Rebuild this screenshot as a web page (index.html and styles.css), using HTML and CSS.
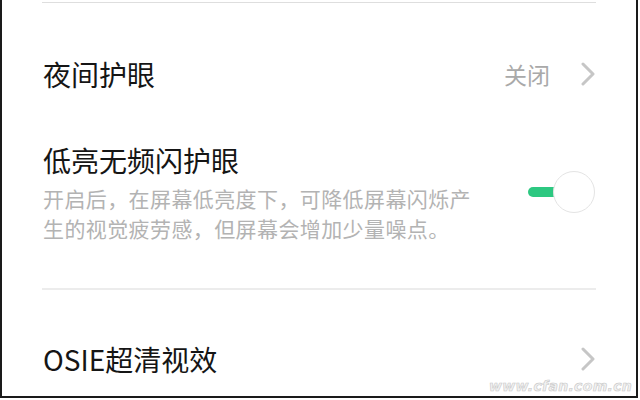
FILE: index.html
```html
<!DOCTYPE html>
<html lang="zh-CN">
<head>
    <meta charset="UTF-8">
    <meta name="viewport" content="width=device-width, initial-scale=1.0">
    <title>显示设置</title>
    <link rel="stylesheet" href="styles.css">
</head>
<body>
    <div class="screen">
        <div class="divider top"></div>

        <div class="row night">
            <span class="title">夜间护眼</span>
            <span class="value">关闭</span>
            <svg class="chevron" width="14" height="24" viewBox="0 0 14 24">
                <path d="M2 2 L12 12 L2 22" />
            </svg>
        </div>

        <div class="row flicker">
            <div class="text">
                <div class="title">低亮无频闪护眼</div>
                <div class="desc">开启后，在屏幕低亮度下，可降低屏幕闪烁产生的视觉疲劳感，但屏幕会增加少量噪点。</div>
            </div>
            <div class="switch">
                <div class="track"></div>
                <div class="knob"></div>
            </div>
        </div>

        <div class="divider"></div>

        <div class="row osie">
            <span class="title">OSIE超清视效</span>
            <svg class="chevron" width="14" height="24" viewBox="0 0 14 24">
                <path d="M2 2 L12 12 L2 22" />
            </svg>
        </div>

        <div class="watermark">www.cfan.com.cn</div>
    </div>
</body>
</html>
```

FILE: styles.css
```css
body {
    margin: 0;
    background: #fff;
    font-family: "Noto Sans CJK SC", "Noto Sans", sans-serif;
}

.screen {
    position: relative;
    width: 634px;
    height: 394px;
    background: #fff;
    border-left: 2px solid #1a1a1a;
    border-right: 2px solid #1a1a1a;
    border-bottom: 2px solid #1a1a1a;
    padding-top: 2px;
    overflow: hidden;
}

.divider {
    height: 2px;
    background: #ececec;
    margin: 0 40px 0 40px;
}

.divider.top {
    height: 1px;
    background: #dedede;
}

.row {
    display: flex;
    align-items: center;
    padding: 0 40px 0 41px;
}

.title {
    font-size: 28px;
    line-height: 34px;
    color: #151515;
}

.night {
    margin-top: 54px;
}

.night .title {
    flex: 1;
}

.value {
    font-size: 23px;
    color: #a9a9a9;
    margin-right: 31px;
}

.chevron {
    margin-right: 1px;
}

.chevron path {
    fill: none;
    stroke: #c6c6c6;
    stroke-width: 3;
    stroke-linecap: round;
    stroke-linejoin: round;
}

.flicker {
    margin-top: 52px;
    align-items: flex-start;
}

.flicker .text {
    width: 440px;
}

.desc {
    margin-top: 6px;
    font-size: 21px;
    line-height: 30px;
    color: #b3b3b3;
    letter-spacing: 0.4px;
}

.switch {
    position: relative;
    margin-left: 45px;
    margin-top: 27px;
    width: 70px;
    height: 44px;
}

.track {
    position: absolute;
    left: 2px;
    top: 17px;
    width: 30px;
    height: 10px;
    border-radius: 5px 0 0 5px;
    background: #2dc881;
}

.knob {
    position: absolute;
    left: 27px;
    top: 1px;
    width: 40px;
    height: 40px;
    border-radius: 50%;
    background: #fff;
    border: 1.5px solid #e4e4e4;
}

.flicker + .divider {
    margin-top: 45px;
}

.osie {
    margin-top: 52px;
}

.osie .title {
    flex: 1;
}

.watermark {
    position: absolute;
    right: 4px;
    bottom: 2px;
    font-family: "DejaVu Sans", sans-serif;
    font-style: italic;
    font-weight: bold;
    font-size: 14px;
    color: #f2f2f2;
    -webkit-text-stroke: 0.6px #c8c8c8;
    letter-spacing: 0.3px;
}
```
